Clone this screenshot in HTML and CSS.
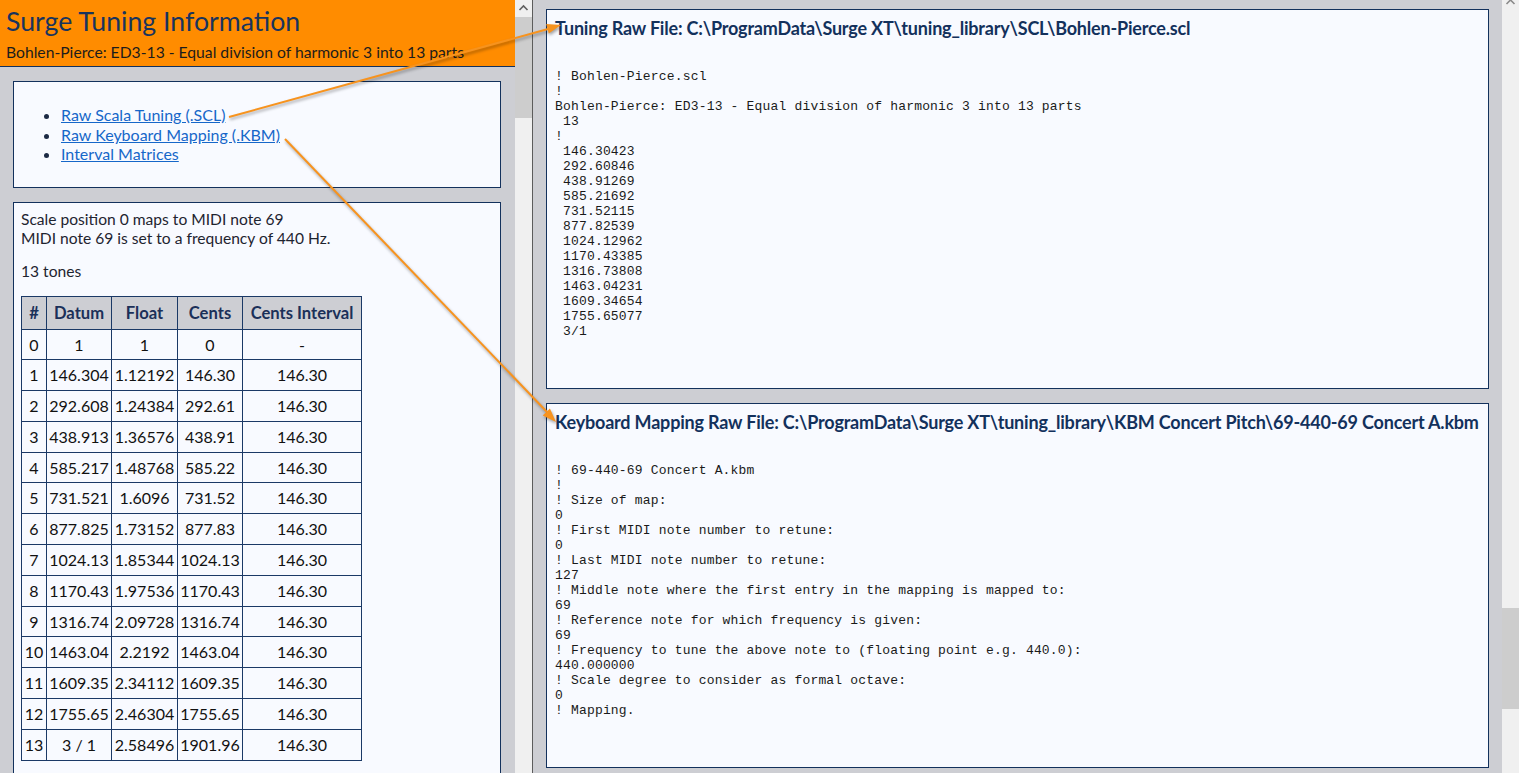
FILE: index.html
```html
<!DOCTYPE html>
<html lang="en">
<head>
<meta charset="utf-8">
<title>Surge Tuning Information</title>
<link rel="stylesheet" href="styles.css">
</head>
<body>
<div class="screen">
  <div class="frame frame-left">
    <div class="frame-content">
      <header class="header">
        <h1 class="title">Surge Tuning Information</h1>
        <div class="subtitle">Bohlen-Pierce: ED3-13 - Equal division of harmonic 3 into 13 parts</div>
      </header>
      <div class="panel links">
        <ul>
          <li><a href="#scl">Raw Scala Tuning (.SCL)</a></li>
          <li><a href="#kbm">Raw Keyboard Mapping (.KBM)</a></li>
          <li><a href="#matrices">Interval Matrices</a></li>
        </ul>
      </div>
      <div class="panel info">
        <p class="mapping">Scale position 0 maps to MIDI note 69<br>MIDI note 69 is set to a frequency of 440 Hz.</p>
        <p class="tones">13 tones</p>
        <table class="tones-table">
          <thead>
            <tr><th class="c-idx">#</th><th class="c-datum">Datum</th><th class="c-float">Float</th><th class="c-cents">Cents</th><th class="c-int">Cents Interval</th></tr>
          </thead>
          <tbody>
            <tr><td>0</td><td>1</td><td>1</td><td>0</td><td>-</td></tr>
            <tr><td>1</td><td>146.304</td><td>1.12192</td><td>146.30</td><td>146.30</td></tr>
            <tr><td>2</td><td>292.608</td><td>1.24384</td><td>292.61</td><td>146.30</td></tr>
            <tr><td>3</td><td>438.913</td><td>1.36576</td><td>438.91</td><td>146.30</td></tr>
            <tr><td>4</td><td>585.217</td><td>1.48768</td><td>585.22</td><td>146.30</td></tr>
            <tr><td>5</td><td>731.521</td><td>1.6096</td><td>731.52</td><td>146.30</td></tr>
            <tr><td>6</td><td>877.825</td><td>1.73152</td><td>877.83</td><td>146.30</td></tr>
            <tr><td>7</td><td>1024.13</td><td>1.85344</td><td>1024.13</td><td>146.30</td></tr>
            <tr><td>8</td><td>1170.43</td><td>1.97536</td><td>1170.43</td><td>146.30</td></tr>
            <tr><td>9</td><td>1316.74</td><td>2.09728</td><td>1316.74</td><td>146.30</td></tr>
            <tr><td>10</td><td>1463.04</td><td>2.2192</td><td>1463.04</td><td>146.30</td></tr>
            <tr><td>11</td><td>1609.35</td><td>2.34112</td><td>1609.35</td><td>146.30</td></tr>
            <tr><td>12</td><td>1755.65</td><td>2.46304</td><td>1755.65</td><td>146.30</td></tr>
            <tr><td>13</td><td>3 / 1</td><td>2.58496</td><td>1901.96</td><td>146.30</td></tr>
          </tbody>
        </table>
      </div>
    </div>
    <div class="scrollbar">
      <div class="sb-arrow"><svg width="17" height="17" viewBox="0 0 17 17"><polyline points="4.5,10 8.5,6 12.5,10" fill="none" stroke="#606060" stroke-width="1.6"/></svg></div>
      <div class="sb-thumb sb-thumb-left"></div>
    </div>
  </div>
  <div class="divider"></div>
  <div class="frame frame-right">
    <div class="frame-content">
      <section class="panel raw raw-scl" id="scl">
        <h2>Tuning Raw File: C:\ProgramData\Surge XT\tuning_library\SCL\Bohlen-Pierce.scl</h2>
<pre>! Bohlen-Pierce.scl
!
Bohlen-Pierce: ED3-13 - Equal division of harmonic 3 into 13 parts
 13
!
 146.30423
 292.60846
 438.91269
 585.21692
 731.52115
 877.82539
 1024.12962
 1170.43385
 1316.73808
 1463.04231
 1609.34654
 1755.65077
 3/1</pre>
      </section>
      <section class="panel raw raw-kbm" id="kbm">
        <h2>Keyboard Mapping Raw File: C:\ProgramData\Surge XT\tuning_library\KBM Concert Pitch\69-440-69 Concert A.kbm</h2>
<pre>! 69-440-69 Concert A.kbm
!
! Size of map:
0
! First MIDI note number to retune:
0
! Last MIDI note number to retune:
127
! Middle note where the first entry in the mapping is mapped to:
69
! Reference note for which frequency is given:
69
! Frequency to tune the above note to (floating point e.g. 440.0):
440.000000
! Scale degree to consider as formal octave:
0
! Mapping.</pre>
      </section>
    </div>
    <div class="scrollbar">
      <div class="sb-arrow sb-arrow-cut"><svg width="17" height="17" viewBox="0 0 17 17"><polyline points="4.5,4 8.5,0 12.5,4" fill="none" stroke="#8a8a8a" stroke-width="1.6"/></svg></div>
      <div class="sb-thumb sb-thumb-right"></div>
    </div>
  </div>
  <svg class="arrows" width="1519" height="773" viewBox="0 0 1519 773">
    <g class="arrow-group">
      <line x1="229" y1="117" x2="548" y2="29" stroke="#f7931e" stroke-width="2"/>
      <polygon points="561,25 548.8,33.5 546.2,23.9" fill="#f7931e"/>
      <line x1="285" y1="139" x2="547" y2="412" stroke="#f7931e" stroke-width="2"/>
      <polygon points="556,422 549.9,408.4 542.7,415.4" fill="#f7931e"/>
    </g>
  </svg>
</div>
</body>
</html>
```
FILE: styles.css
```css
* { box-sizing: border-box; }

html, body {
  margin: 0;
  padding: 0;
}

body {
  width: 1519px;
  height: 773px;
  overflow: hidden;
  background: #cdced3;
  font-family: Lato, "Noto Sans", "Liberation Sans", sans-serif;
  color: #1e1e1e;
}

.screen {
  position: relative;
  display: flex;
  height: 773px;
}

.frame {
  display: flex;
  height: 773px;
  overflow: hidden;
}

.frame-left { width: 532px; }
.frame-right { width: 986px; }

.frame-content {
  flex: 1;
  min-width: 0;
  background: #cdced3;
  overflow: hidden;
}

.divider {
  width: 1px;
  background: #5c5c5c;
}

/* scrollbars */
.scrollbar {
  width: 17px;
  flex: none;
  background: #f0f0f0;
  display: flex;
  flex-direction: column;
}

.sb-arrow {
  height: 17px;
  flex: none;
}

.sb-arrow svg { display: block; }

.sb-thumb {
  background: #cdcdcd;
  height: 101px;
  flex: none;
}

.sb-thumb-right { margin-top: 591px; }

/* header */
.header {
  background: #ff8c00;
  border-bottom: 1px solid #13315c;
  padding: 4px 6px 4px 6px;
}

.title {
  margin: 0;
  font-size: 26.7px;
  font-weight: 400;
  line-height: 34px;
  color: #19345e;
}

.subtitle {
  margin-top: 5px;
  font-size: 15.7px;
  line-height: 19px;
  color: #1c1c1c;
}

/* panels */
.panel {
  background: #f8faff;
  border: 1px solid #13315c;
}

.links, .info {
  margin: 14px 14px 0 13px;
  padding: 7px;
}

.info {
  padding-bottom: 30px;
}

.links ul {
  margin: 16px 0;
  padding-left: 40px;
  font-size: 16px;
  line-height: 19.5px;
  color: #1c2a44;
}

.links a {
  color: #1667c9;
  text-decoration: underline;
}

.info p {
  margin: 0;
  font-size: 15.6px;
  line-height: 19px;
  color: #1e2430;
}

.info .tones {
  margin: 14px 0 15px;
}

.tones-table {
  border-collapse: collapse;
  table-layout: fixed;
  width: 340px;
  font-size: 16px;
  color: #111;
}

.tones-table th,
.tones-table td {
  border: 1px solid #1b3966;
  text-align: center;
  line-height: 20px;
  padding: 5px 0;
  white-space: nowrap;
}

.tones-table td {
  line-height: 19.8px;
}

.tones-table th {
  background: #cdced3;
  color: #1b3059;
  font-weight: 700;
  font-size: 16.6px;
  padding: 6px 0;
}

.c-idx { width: 25px; }
.c-datum { width: 65px; }
.c-float { width: 66px; }
.c-cents { width: 65px; }
.c-int { width: 119px; }

/* raw file panels */
.raw {
  margin: 0 13px;
  padding: 7px 8px;
}

.raw-scl {
  margin-top: 9px;
  height: 380px;
}

.raw-kbm {
  margin-top: 14px;
  height: 365px;
}

.raw h2 {
  margin: 0;
  font-size: 18px;
  line-height: 22px;
  font-weight: 700;
  color: #13315c;
  letter-spacing: -0.19px;
  white-space: nowrap;
}

.raw pre {
  margin: 30px 0 0;
  font-family: "Liberation Mono", "Courier New", monospace;
  font-size: 13px;
  letter-spacing: 0.18px;
  line-height: 15px;
  color: #1a1a1a;
}

/* annotation arrows overlaid on the screenshot */
.arrows {
  position: absolute;
  left: 0;
  top: 0;
  pointer-events: none;
}

.arrow-group {
  filter: drop-shadow(1px 2px 1.5px rgba(0, 0, 0, 0.35));
}
```
